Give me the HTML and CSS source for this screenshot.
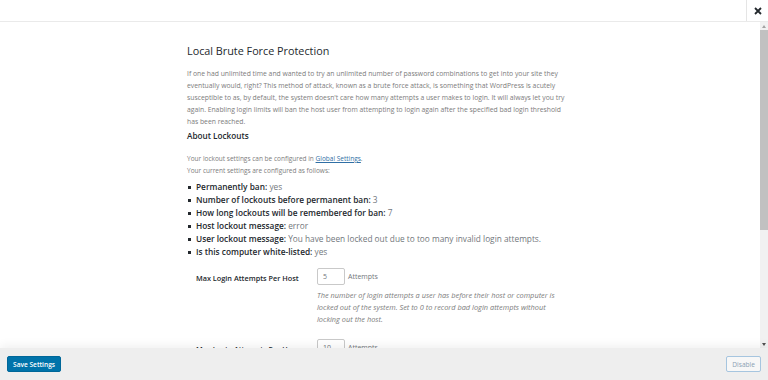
FILE: index.html
```
<!DOCTYPE html>
<html lang="en">
<head>
    <meta charset="UTF-8">
    <meta name="viewport" content="width=device-width, initial-scale=1.0">
    <title>Local Brute Force Protection</title>
    <link rel="stylesheet" href="styles.css">
</head>
<body>
    <div class="modal">
        <div class="modal-header">
            <div class="modal-title"></div>
            <button class="close" type="button" aria-label="Close">
                <svg width="8" height="8" viewBox="0 0 8 8"><path d="M1 1L7 7M7 1L1 7" stroke="#23282d" stroke-width="1.8"/></svg>
            </button>
        </div>
        <div class="modal-body">
            <div class="scroll-content">
                <div class="settings">
                    <h2>Local Brute Force Protection</h2>
                    <p class="intro">If one had unlimited time and wanted to try an unlimited number of password combinations to get into your site they eventually would, right? This method of attack, known as a brute force attack, is something that WordPress is acutely susceptible to as, by default, the system doesn't care how many attempts a user makes to login. It will always let you try again. Enabling login limits will ban the host user from attempting to login again after the specified bad login threshold has been reached.</p>

                    <h3>About Lockouts</h3>
                    <p class="note">Your lockout settings can be configured in <a href="#">Global Settings</a>.<br>Your current settings are configured as follows:</p>
                    <ul class="current">
                        <li><strong>Permanently ban:</strong> yes</li>
                        <li><strong>Number of lockouts before permanent ban:</strong> 3</li>
                        <li><strong>How long lockouts will be remembered for ban:</strong> 7</li>
                        <li><strong>Host lockout message:</strong> error</li>
                        <li><strong>User lockout message:</strong> You have been locked out due to too many invalid login attempts.</li>
                        <li><strong>Is this computer white-listed:</strong> yes</li>
                    </ul>

                    <div class="form-row">
                        <label for="maxHost">Max Login Attempts Per Host</label>
                        <div class="field">
                            <div class="inline"><input type="text" id="maxHost" value="5"> Attempts</div>
                            <p class="description">The number of login attempts a user has before their host or computer is locked out of the system. Set to 0 to record bad login attempts without locking out the host.</p>
                        </div>
                    </div>
                    <div class="form-row">
                        <label for="maxUser">Max Login Attempts Per User</label>
                        <div class="field">
                            <div class="inline"><input type="text" id="maxUser" value="10"> Attempts</div>
                            <p class="description">The number of login attempts a user has before their username is locked out of the system.</p>
                        </div>
                    </div>
                </div>
            </div>
            <div class="scrollbar">
                <div class="scroll-btn up"></div>
                <div class="scroll-thumb"></div>
                <div class="scroll-track"></div>
                <div class="scroll-btn down"></div>
            </div>
        </div>
        <div class="modal-footer">
            <button type="button" class="btn btn-primary">Save Settings</button>
            <button type="button" class="btn btn-disable">Disable</button>
        </div>
    </div>
</body>
</html>
```

FILE: styles.css
```
html, body {
    margin: 0;
    padding: 0;
    height: 100%;
}

body {
    font-family: 'Open Sans', 'Noto Sans', sans-serif;
    background-color: #fff;
    color: #23282d;
    overflow: hidden;
}

.modal {
    display: flex;
    flex-direction: column;
    height: 100vh;
}

.modal-header {
    display: flex;
    height: 21px;
    border-bottom: 1px solid #eaeaea;
    flex-shrink: 0;
}
.modal-title {
    flex: 1;
}
.close {
    width: 22px;
    height: 21px;
    padding: 0;
    border: none;
    border-left: 1px solid #e5e5e5;
    background: #fff;
    display: flex;
    align-items: center;
    justify-content: center;
    cursor: pointer;
}

.modal-body {
    flex: 1;
    display: flex;
    min-height: 0;
}
.scroll-content {
    flex: 1;
    overflow: hidden;
}

/* fake scrollbar, the real one is hidden in the screenshot browser */
.scrollbar {
    width: 8px;
    display: flex;
    flex-direction: column;
    background: #f1f1f1;
}
.scroll-btn {
    height: 8px;
    display: flex;
    align-items: center;
    justify-content: center;
}
.scroll-btn::before {
    content: "";
    border-left: 2px solid transparent;
    border-right: 2px solid transparent;
}
.scroll-btn.up::before {
    border-bottom: 3px solid #a3a3a3;
}
.scroll-btn.down::before {
    border-top: 3px solid #505050;
}
.scroll-thumb {
    height: 200px;
    background: #c1c1c1;
}
.scroll-track {
    flex: 1;
}

.settings {
    width: 386px;
    margin: 0 auto;
    padding: 21px 0 0;
}

h2 {
    font-size: 10.8px;
    font-weight: 400;
    margin: 0 0 10px;
    color: #23282d;
}
.intro {
    font-size: 6.8px;
    line-height: 12px;
    color: #7c7c7c;
    margin: 0 0 2px;
}
h3 {
    font-size: 8.2px;
    font-weight: 600;
    margin: 0 0 12px;
    color: #23282d;
}
.note {
    font-size: 6.5px;
    line-height: 12px;
    color: #7c7c7c;
    margin: 0 0 3px;
}
.note a {
    color: #2f6fa5;
}
.current {
    list-style: none;
    margin: 0 0 10px;
    padding: 0;
    font-size: 8.3px;
    line-height: 13px;
    color: #72777c;
}
.current li::before {
    content: "";
    display: inline-block;
    width: 3px;
    height: 3px;
    margin: 0 5px 0 1px;
    background: #23282d;
    vertical-align: middle;
}
.current strong {
    color: #23282d;
    font-weight: 600;
}

.form-row {
    display: flex;
    padding-left: 9px;
    margin-bottom: 14px;
}
.form-row label {
    width: 121px;
    font-size: 7.3px;
    font-weight: 600;
    padding-top: 5px;
    color: #23282d;
}
.field {
    flex: 1;
}
.inline {
    display: flex;
    align-items: center;
    gap: 3px;
    font-size: 7px;
    color: #72777c;
}
.inline input {
    width: 28px;
    height: 17px;
    box-sizing: border-box;
    border: 1px solid #c9c9c9;
    border-radius: 2px;
    padding: 0 5px;
    font-family: 'Open Sans', sans-serif;
    font-size: 7px;
    color: #72777c;
}
.description {
    margin: 4px 0 0;
    font-size: 7.4px;
    line-height: 12px;
    font-style: italic;
    color: #7c7c7c;
    width: 244px;
}

.modal-footer {
    flex-shrink: 0;
    height: 32px;
    background: #eeeeee;
    display: flex;
    align-items: center;
    justify-content: space-between;
    padding: 0 7px;
    box-shadow: 0 -3px 10px rgba(0, 0, 0, 0.06);
    position: relative;
}
.btn {
    height: 16px;
    padding: 0 5px;
    border-radius: 2px;
    font-family: 'Open Sans', sans-serif;
    font-size: 6.6px;
    cursor: pointer;
}
.btn-primary {
    background: #0073aa;
    border: 1px solid #006799;
    color: #fff;
    font-weight: 600;
}
.btn-disable {
    background: #f7f7f7;
    border: 1px solid #a6c5df;
    color: #8aa0b3;
}
```
